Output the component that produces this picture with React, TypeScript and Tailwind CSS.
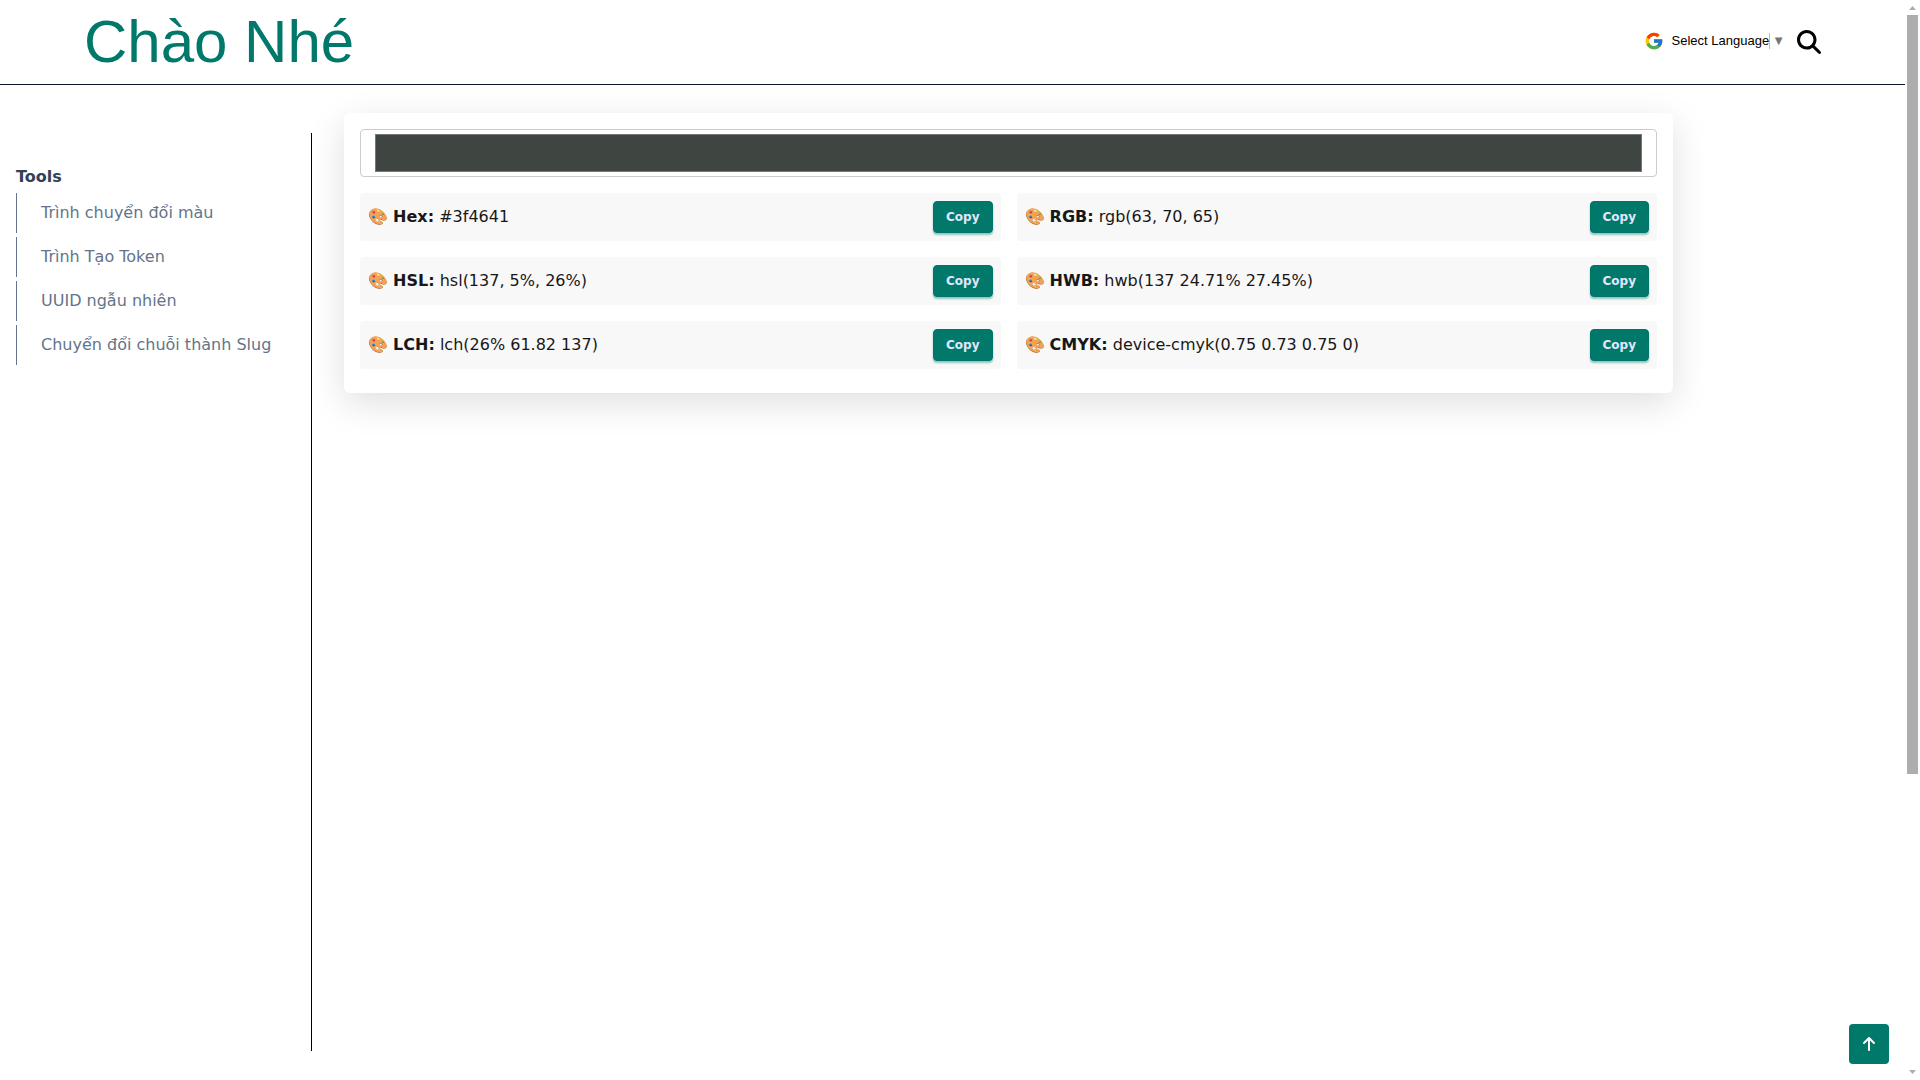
import { FcGoogle } from "react-icons/fc"
import { FaArrowUp, FaMagnifyingGlass } from "react-icons/fa6"

const tools = [
  "Trình chuyển đổi màu",
  "Trình Tạo Token",
  "UUID ngẫu nhiên",
  "Chuyển đổi chuỗi thành Slug",
]

const formats = [
  { label: "Hex", value: "#3f4641" },
  { label: "RGB", value: "rgb(63, 70, 65)" },
  { label: "HSL", value: "hsl(137, 5%, 26%)" },
  { label: "HWB", value: "hwb(137 24.71% 27.45%)" },
  { label: "LCH", value: "lch(26% 61.82 137)" },
  { label: "CMYK", value: "device-cmyk(0.75 0.73 0.75 0)" },
]

const Header = () => (
  <header className="flex h-[85px] items-center justify-between border-b border-[#0f172a] px-[84px]">
    <a
      href="#"
      className="font-['Liberation_Sans',sans-serif] text-6xl text-[#00796b]"
    >
      Chào Nhé
    </a>
    <div className="flex items-center gap-3">
      <a
        href="#"
        className="flex items-center pb-0.5 font-['Liberation_Sans',sans-serif] text-[13px] leading-4 text-black"
      >
        <FcGoogle className="mr-2 size-5" />
        <span>Select Language</span>
        <span className="border-l border-[#bbb] pl-0.5 text-[#767676]">▼</span>
      </a>
      <button type="button" aria-label="Search">
        <FaMagnifyingGlass className="size-6 text-black" />
      </button>
    </div>
  </header>
)

const Sidebar = () => (
  <aside className="mt-12 h-[85vh] w-78 shrink-0 border-r border-black px-4 pt-8">
    <h5 className="mb-1 leading-6 font-bold text-[#334155]">Tools</h5>
    <ul className="space-y-1">
      {tools.map((tool) => (
        <li key={tool} className="border-l border-[#64748b]">
          <a href="#" className="block py-2 pl-6 leading-6 text-[#64748b]">
            {tool}
          </a>
        </li>
      ))}
    </ul>
  </aside>
)

const ColorConverter = () => (
  <section className="rounded-md bg-white p-4 pb-6 shadow-[0_10px_36px_rgba(0,0,0,0.13)]">
    <input
      type="color"
      aria-label="Color"
      defaultValue="#3f4641"
      className="mb-4 block h-12 w-full rounded border border-[#ccc] bg-white px-3"
    />
    <div className="grid grid-cols-2 gap-4">
      {formats.map(({ label, value }) => (
        <div
          key={label}
          className="flex items-center justify-between rounded bg-[#f8f8f8] p-2"
        >
          <p>
            🎨 <strong>{label}:</strong> {value}
          </p>
          <button
            type="button"
            className="h-8 rounded border border-[#007466] bg-[#00796b] px-3 text-xs font-bold text-[#e0e7ff] shadow-[0_2px_2px_rgba(0,121,107,0.4)]"
          >
            Copy
          </button>
        </div>
      ))}
    </div>
  </section>
)

const Scrollbar = () => (
  <div className="flex w-[15px] shrink-0 flex-col items-center bg-white py-1.5">
    <svg width="7" height="4" viewBox="0 0 7 4" fill="#adadad">
      <path d="M3.5 0L7 4H0Z" />
    </svg>
    <div className="mt-[5px] h-[759px] w-[11px] bg-[#adadad]" />
    <svg
      width="7"
      height="4"
      viewBox="0 0 7 4"
      fill="#adadad"
      className="mt-auto"
    >
      <path d="M0 0H7L3.5 4Z" />
    </svg>
  </div>
)

const App = () => (
  <div className="flex h-screen bg-white font-['DejaVu_Sans',sans-serif] text-base text-[#171717]">
    <div className="min-w-0 flex-1">
      <Header />
      <div className="flex">
        <Sidebar />
        <main className="mt-7 mr-58 ml-8 flex-1">
          <ColorConverter />
        </main>
      </div>
    </div>
    <Scrollbar />
    <button
      type="button"
      aria-label="Back to top"
      className="fixed right-[31px] bottom-4 flex size-10 items-center justify-center rounded bg-[#00796b] text-white"
    >
      <FaArrowUp className="size-4" />
    </button>
  </div>
)

export default App
